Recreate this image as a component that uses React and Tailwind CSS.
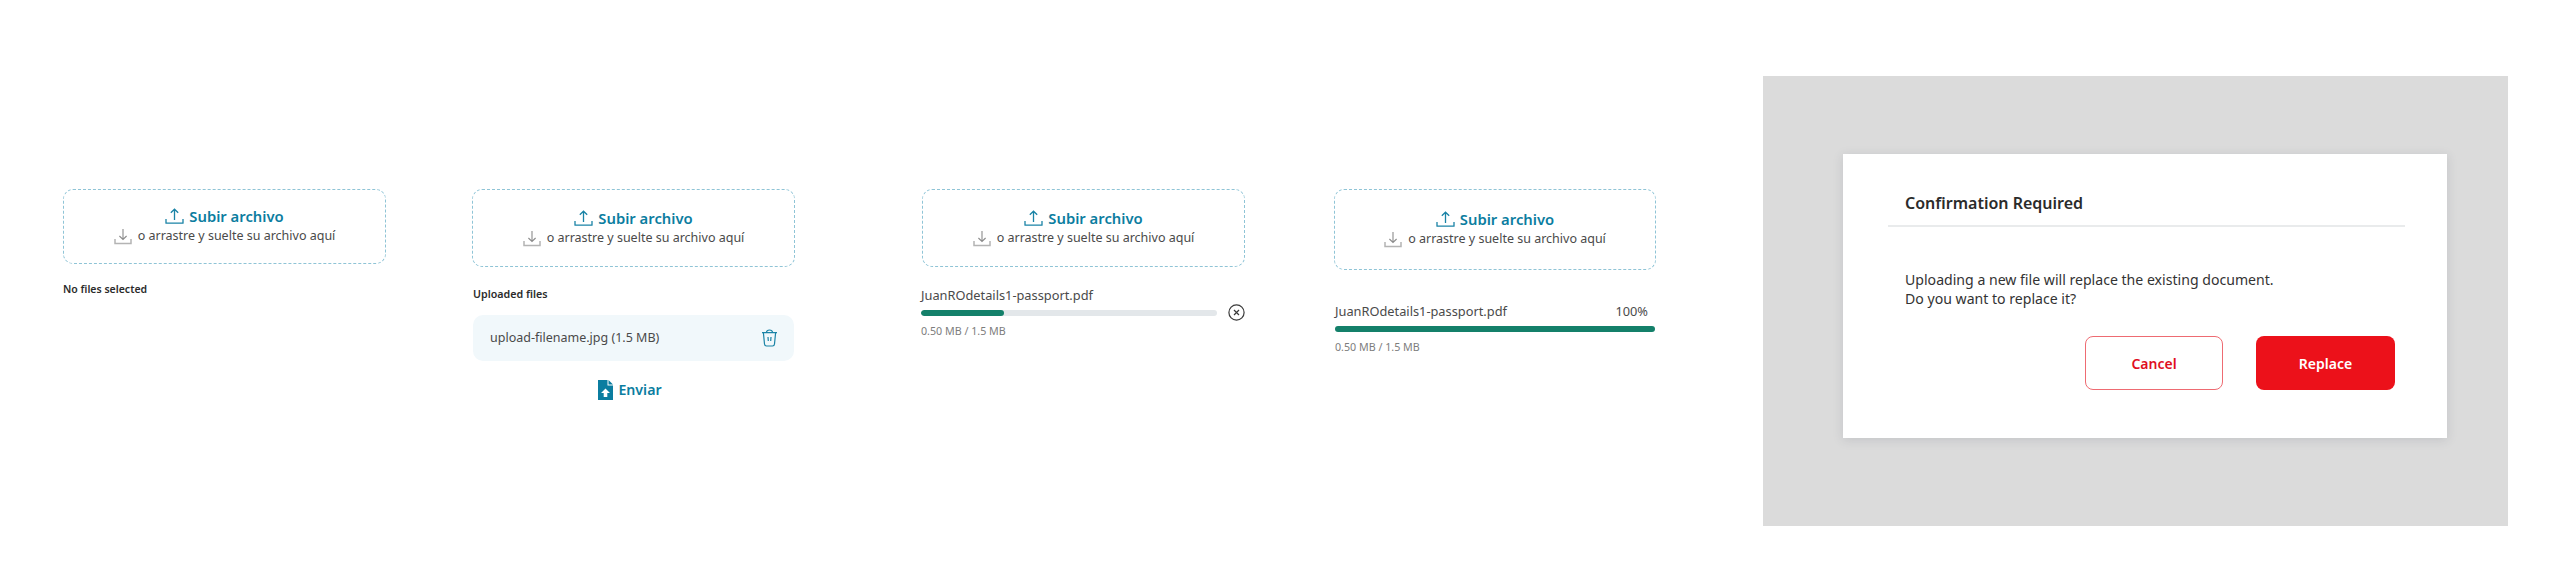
function UploadIcon() {
  return (
    <svg width="19" height="17" viewBox="0 0 19 17" fill="none" stroke="#1a83a6" strokeWidth="1.3" className="shrink-0">
      <path d="M1 11v4.2h17V11" strokeLinejoin="round" />
      <path d="M9.5 12V1.2M5.8 4.8 9.5 1.2l3.7 3.6" />
    </svg>
  );
}
function DownloadIcon() {
  return (
    <svg width="18" height="17" viewBox="0 0 18 17" fill="none" className="shrink-0">
      <path d="M1 11v4.4h16V11" stroke="#b4b4b4" strokeWidth="1.5" />
      <path d="M9 1v10.5M5.4 8 9 11.5 12.6 8" stroke="#8c8c8c" strokeWidth="1.1" />
    </svg>
  );
}
function Drop({ h }) {
  return (
    <div className={`${h} w-full rounded-[10px] border border-dashed border-[#8fc4d6] flex flex-col items-center justify-center`}>
      <div className="flex items-center gap-[5px] h-[20px] text-[#0b7da0] text-[14.8px] font-semibold leading-none">
        <UploadIcon />
        <span>Subir archivo</span>
      </div>
      <div className="flex items-center gap-[6px] h-[20px] text-[#4a4a4a] text-[12.5px] leading-none">
        <DownloadIcon />
        <span>o arrastre y suelte su archivo aquí</span>
      </div>
    </div>
  );
}
export default function App() {
  return (
    <div className="w-[2560px] h-[571px] bg-white flex items-start overflow-hidden font-['Noto_Sans',sans-serif]">
      <div className="ml-[63px] mt-[189px] w-[323px] shrink-0">
        <Drop h="h-[75px]" />
        <p className="mt-[18px] text-[10.5px] leading-[14px] font-semibold text-[#2b2b2b]">No files selected</p>
      </div>
      <div className="ml-[86px] mt-[189px] w-[323px] shrink-0">
        <Drop h="h-[78px]" />
        <p className="mt-[20px] ml-[1px] text-[10.7px] leading-[14px] font-semibold text-[#2b2b2b]">Uploaded files</p>
        <div className="mt-[14px] ml-[1px] h-[46px] w-[321px] rounded-[10px] bg-[#f1f8fb] flex items-center justify-between pl-[17px] pr-[16px]">
          <span className="text-[12.5px] text-[#4a4a4a]">upload-filename.jpg (1.5 MB)</span>
          <svg width="17" height="18" viewBox="0 0 17 18" fill="none" stroke="#1a83a6" strokeWidth="1.2">
            <path d="M1 3.6h15M5.4 3.4C5.6 1.6 6.4 1 8.5 1s2.9.6 3.1 2.4" />
            <path d="M2.4 3.8 3.5 15c.1 1.2.9 2 2 2h6c1.1 0 1.9-.8 2-2l1.1-11.2" />
            <path d="M7 8l.3 4M10 8l-.3 4" />
          </svg>
        </div>
        <div className="mt-[19px] flex items-center justify-center gap-[5px] text-[#0b7da0] text-[14.2px] font-semibold leading-none pr-[7px]">
          <svg width="15" height="20" viewBox="0 0 15 20">
            <path d="M0 0h9.5v5.5H15V20H0z" fill="#0b7da0" />
            <path d="M10.5 0 15 4.5h-4.5z" fill="#0b7da0" />
            <path d="M7.5 8.5 12 13H9.3v4H5.7v-4H3z" fill="#fff" />
          </svg>
          <span>Enviar</span>
        </div>
      </div>
      <div className="ml-[127px] mt-[189px] w-[323px] shrink-0">
        <Drop h="h-[78px]" />
        <p className="mt-[19px] -ml-[1px] text-[12.8px] leading-[18px] text-[#4a4a4a]">JuanROdetails1-passport.pdf</p>
        <div className="flex items-center justify-between">
          <div className="w-[296px] -ml-[1px] h-[6px] rounded-full bg-[#e3e7ea] overflow-hidden">
            <div className="h-full w-[28%] rounded-full bg-[#14806a]" />
          </div>
          <svg width="17" height="17" viewBox="0 0 17 17" fill="none" stroke="#3a3a3a" strokeWidth="1.2">
            <circle cx="8.5" cy="8.5" r="7.6" />
            <path d="M6 6l5 5M11 6l-5 5" />
          </svg>
        </div>
        <p className="mt-[2px] -ml-[1px] text-[10.7px] leading-[16px] text-[#7d7d7d]">0.50 MB / 1.5 MB</p>
      </div>
      <div className="ml-[89px] mt-[189px] w-[322px] shrink-0">
        <Drop h="h-[81px]" />
        <div className="mt-[32px] pl-[1px] pr-[8px] flex justify-between text-[12.8px] leading-[18px] text-[#4a4a4a]">
          <span>JuanROdetails1-passport.pdf</span>
          <span>100%</span>
        </div>
        <div className="mt-[6px] ml-[1px] w-[320px] h-[6px] rounded-full bg-[#14806a]" />
        <p className="mt-[7px] ml-[1px] text-[10.7px] leading-[16px] text-[#7d7d7d]">0.50 MB / 1.5 MB</p>
      </div>
      <div className="ml-[107px] mt-[76px] w-[745px] h-[450px] shrink-0 bg-[#dbdbdb] pt-[78px] pl-[80px]">
        <div className="w-[604px] h-[284px] bg-white shadow-[0_2px_10px_rgba(60,70,90,0.15)] pt-[36px] pl-[45px] pr-[42px]">
          <div className="h-[37px] border-b-2 border-[#e9ebec] pt-[1px]">
            <p className="pl-[17px] text-[16px] leading-[24px] font-semibold text-[#2b2b2b]">Confirmation Required</p>
          </div>
          <div className="mt-[43px] pl-[17px] text-[14.1px] leading-[19px] text-[#333333]">
            <p>Uploading a new file will replace the existing document.</p>
            <p>Do you want to replace it?</p>
          </div>
          <div className="mt-[28px] flex justify-end gap-[33px] pr-[10px]">
            <button className="w-[138px] h-[54px] rounded-[8px] border border-[#ee6b72] bg-white text-[#e00f1e] text-[14px] font-semibold">Cancel</button>
            <button className="w-[139px] h-[54px] rounded-[8px] bg-[#ec111a] text-white text-[14px] font-semibold">Replace</button>
          </div>
        </div>
      </div>
    </div>
  );
}
